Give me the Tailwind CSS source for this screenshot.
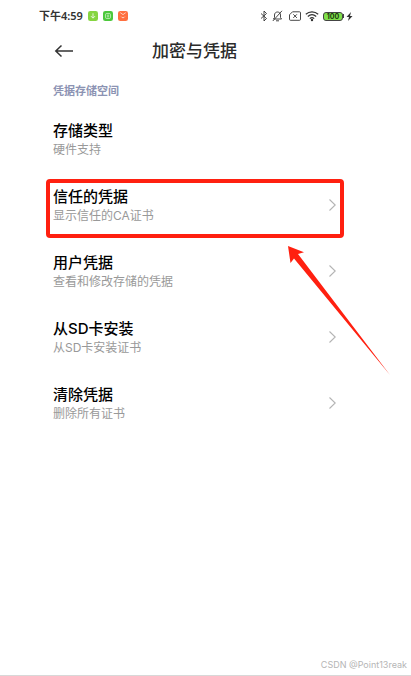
<!DOCTYPE html>
<html lang="zh-CN">
<head>
<meta charset="utf-8">
<meta name="viewport" content="width=device-width, initial-scale=1">
<title>加密与凭据</title>
<script src="https://cdn.jsdelivr.net/npm/@tailwindcss/browser@4"></script>
</head>
<body class="flex min-h-screen flex-col border-b border-[#d8d8d8] bg-white font-['Inter','Noto_Sans_CJK_SC',sans-serif] text-black">
  <div class="flex h-8 items-center justify-between pr-[58px] pl-[39px] text-[#333]">
    <div class="flex items-center gap-[5px]">
      <span class="font-['Noto_Sans','Noto_Sans_CJK_SC',sans-serif] text-[11px] leading-4 font-semibold">下午4:59</span>
      <svg class="size-[10px]" viewBox="0 0 11 11" fill="none" aria-hidden="true"><rect width="11" height="11" rx="2.5" fill="#86d540"/><path d="M5.5 2.5v5M3.2 5.6l2.3 2.3 2.3-2.3" stroke="#fff" stroke-opacity=".85"/></svg>
      <svg class="size-[10px]" viewBox="0 0 11 11" fill="none" aria-hidden="true"><rect width="11" height="11" rx="2.5" fill="#4cc83c"/><rect x="2.7" y="2.7" width="5.6" height="5.6" rx="1.5" stroke="#d8f5d0" stroke-width=".8"/><path d="M4.2 4.6h2.6M4.2 6.4h2.6" stroke="#e6fae0" stroke-width=".8"/></svg>
      <svg class="size-[10px]" viewBox="0 0 11 11" fill="none" aria-hidden="true"><rect width="11" height="11" rx="2.5" fill="#ff7040"/><path d="M2.5 1.8 5.5 4l3-2.2M3.5 6.2c.8 1.6 3.200 1.600 4 0" stroke="#ffe0d4" stroke-width=".9"/></svg>
    </div>
    <div class="flex items-center gap-1">
      <svg class="h-3 w-2" viewBox="0 0 8 12" fill="none" stroke="currentColor" stroke-width=".9" aria-hidden="true"><path d="m1 3.500 5.500 5L4 11V1l2.500 2.500L1 8.500"/></svg>
      <svg class="h-3 w-[11px]" viewBox="0 0 11 12" fill="none" stroke="currentColor" stroke-width=".9" aria-hidden="true"><path d="M1.500 9h8L8.500 7.500V5C8.500 1 2.500 1 2.500 5v2.500L1.500 9ZM4 10.800h3M10 .8.800 11"/></svg>
      <svg class="ml-[2px] h-3 w-3" viewBox="0 0 12 12" fill="none" stroke="currentColor" stroke-width=".9" aria-hidden="true"><path d="M3.500 1.800H10.500a1 1 0 0 1 1 1v6.500a1 1 0 0 1-1 1h-9a1 1 0 0 1-1-1V4.800ZM4.300 4.300l3.600 3.600M7.900 4.300 4.300 7.900"/></svg>
      <svg class="h-3 w-[14px]" viewBox="0 0 14 12" fill="none" stroke="currentColor" stroke-width="1.200" aria-hidden="true"><path d="M.8 4.300c3.600-3.200 8.800-3.200 12.400 0M2.800 6.500c2.500-2.200 5.900-2.200 8.400 0M4.800 8.600c1.400-1.200 3-1.200 4.400 0"/><circle cx="7" cy="10" r=".6" fill="currentColor"/></svg>
      <div class="flex items-center">
        <span class="flex h-[9px] w-5 items-center justify-center rounded-[3px] border border-[#444] bg-[#7fe04a] text-[7px] leading-none font-bold text-[#1c3a10]">100</span>
        <span class="h-1 w-px bg-[#444]"></span>
        <svg class="ml-[2px] h-[9px] w-[7px]" viewBox="0 0 7 9" fill="currentColor" aria-hidden="true"><path d="M5 0 .5 5H3L2 9l4.500-5H4Z"/></svg>
      </div>
    </div>
  </div>

  <header class="relative flex h-[38px] items-center justify-center pr-[22px]">
    <button type="button" aria-label="返回" class="absolute inset-y-0 left-[54px] flex items-center">
      <svg class="h-[14px] w-[19px]" viewBox="0 0 19 14" fill="none" stroke="#333" stroke-width="1.500" aria-hidden="true"><path d="M7.500 1.500 1.800 7l5.700 5.500M1.800 7H19"/></svg>
    </button>
    <h1 class="text-[17px] leading-6 font-medium text-[#2b2b2b]">加密与凭据</h1>
  </header>

  <main class="flex-1 pt-[13px] pr-[75px] pl-[53px]">
    <h2 class="pb-1.5 text-[11px] leading-4 font-bold text-[#8c93b3]">凭据存储空间</h2>
    <ul>
      <li class="pt-4 pb-[13px]">
        <h3 class="text-[15px] leading-5 font-medium">存储类型</h3>
        <p class="mt-px text-[12px] leading-4 text-[#999]">硬件支持</p>
      </li>
      <li class="relative">
        <a href="#trusted" class="flex items-center justify-between pt-4 pb-[13px]">
          <span>
            <span class="block text-[15px] leading-5 font-medium">信任的凭据</span>
            <span class="mt-px block text-[12px] leading-4 text-[#999]">显示信任的CA证书</span>
          </span>
          <svg class="mb-[2px] h-3 w-[7px]" viewBox="0 0 7 12" fill="none" stroke="#b4b4b4" stroke-width="1.100" aria-hidden="true"><path d="m.5.500 5.700 5.500L.5 11.500"/></svg>
        </a>
        <div class="pointer-events-none absolute -inset-x-2 top-2 -bottom-px ml-px rounded-[4px] border-4 border-[#ff2010]"></div>
        <svg class="pointer-events-none absolute top-[75px] -right-[54px] h-[130px] w-[104px]" viewBox="0 0 104 130" fill="#ff2010" aria-hidden="true"><path d="M2 0 18 6.200 12 8 104 129 8 12.500 4.500 17Z"/></svg>
      </li>
      <li>
        <a href="#user" class="flex items-center justify-between pt-4 pb-[13px]">
          <span>
            <span class="block text-[15px] leading-5 font-medium">用户凭据</span>
            <span class="mt-px block text-[12px] leading-4 text-[#999]">查看和修改存储的凭据</span>
          </span>
          <svg class="mb-[2px] h-3 w-[7px]" viewBox="0 0 7 12" fill="none" stroke="#b4b4b4" stroke-width="1.100" aria-hidden="true"><path d="m.5.500 5.700 5.500L.5 11.500"/></svg>
        </a>
      </li>
      <li>
        <a href="#install" class="flex items-center justify-between pt-4 pb-[13px]">
          <span>
            <span class="block text-[15px] leading-5 font-medium">从SD卡安装</span>
            <span class="mt-px block text-[12px] leading-4 text-[#999]">从SD卡安装证书</span>
          </span>
          <svg class="mb-[2px] h-3 w-[7px]" viewBox="0 0 7 12" fill="none" stroke="#b4b4b4" stroke-width="1.100" aria-hidden="true"><path d="m.5.500 5.700 5.500L.5 11.500"/></svg>
        </a>
      </li>
      <li>
        <a href="#clear" class="flex items-center justify-between pt-4 pb-[13px]">
          <span>
            <span class="block text-[15px] leading-5 font-medium">清除凭据</span>
            <span class="mt-px block text-[12px] leading-4 text-[#999]">删除所有证书</span>
          </span>
          <svg class="mb-[2px] h-3 w-[7px]" viewBox="0 0 7 12" fill="none" stroke="#b4b4b4" stroke-width="1.100" aria-hidden="true"><path d="m.5.500 5.700 5.500L.5 11.500"/></svg>
        </a>
      </li>
    </ul>
  </main>
  <footer class="pr-1 pb-1 text-right text-[9px] leading-3 text-[#b5b5b5]">CSDN @Point13reak</footer>
</body>
</html>
